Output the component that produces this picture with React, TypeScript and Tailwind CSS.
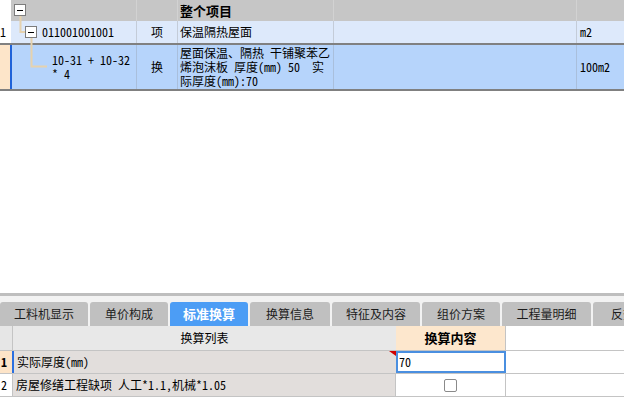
import React from "react";

const tabs = [
  { label: "工料机显示", w: "w-[88px]" },
  { label: "单价构成", w: "w-[78px]" },
  { label: "标准换算", w: "w-[78px]", active: true },
  { label: "换算信息", w: "w-[80px]" },
  { label: "特征及内容", w: "w-[88px]" },
  { label: "组价方案", w: "w-[78px]" },
  { label: "工程量明细", w: "w-[89px]" },
  { label: "反查", w: "w-[60px]" },
];

function TreeLines() {
  return (
    <svg className="absolute left-0 top-0 pointer-events-none" width="60" height="92">
      <path d="M20.5 16 V32 H25" fill="none" stroke="#e6d2ae" strokeWidth="2" />
      <path d="M31.5 38 V66.5 H47" fill="none" stroke="#e6d2ae" strokeWidth="2" />
      <rect x="14.5" y="4.5" width="11" height="11" fill="#fff" stroke="#7c7c7c" />
      <path d="M17 10.5 H23" stroke="#000" />
      <rect x="25.5" y="26.5" width="11" height="11" fill="#fff" stroke="#7c7c7c" />
      <path d="M28 32.5 H34" stroke="#000" />
    </svg>
  );
}

export default function App() {
  return (
    <div className="relative w-[624px] h-[411px] overflow-hidden bg-white flex flex-col text-[12px] leading-[14px] text-black font-['Noto_Sans_Mono_CJK_SC','Noto_Sans_CJK_SC',sans-serif]">
      {/* upper grid */}
      <div className="relative flex flex-col">
        <div className="flex h-[21px]">
          <div className="w-[11px] bg-white" />
          <div className="flex flex-1 bg-[#c6c6c6]">
            <div className="w-[126px] border-r border-[#d2d2d2]" />
            <div className="w-[41px] border-r border-[#d2d2d2]" />
            <div className="w-[156px] border-r border-[#d2d2d2] pl-[2px] flex items-center text-[13px] font-bold">
              整个项目
            </div>
            <div className="w-[243px] border-r border-[#d2d2d2]" />
            <div className="flex-1" />
          </div>
        </div>
        <div className="flex h-[22px] items-stretch">
          <div className="w-[11px] bg-white flex items-center">1</div>
          <div className="flex flex-1 bg-[#dde9fb]">
            <div className="w-[126px] border-r border-[#c4ccd8] pl-[31px] flex items-center">011001001001</div>
            <div className="w-[41px] border-r border-[#c4ccd8] flex items-center justify-center">项</div>
            <div className="w-[156px] border-r border-[#c4ccd8] pl-[2px] flex items-center">保温隔热屋面</div>
            <div className="w-[243px] border-r border-[#c4ccd8]" />
            <div className="flex-1 pl-[3px] flex items-center">m2</div>
          </div>
        </div>
        <div className="flex h-[48px] border-y-2 border-[#808080]">
          <div className="w-[10px] bg-[#fde5c9]" />
          <div className="w-[2px] bg-[#1f62d8]" />
          <div className="flex flex-1 bg-[#b6d4fb]">
            <div className="w-[125px] border-r border-[#a9bfdc] pl-[40px] flex flex-col justify-center">
              <span>10-31 + 10-32</span>
              <span>* 4</span>
            </div>
            <div className="w-[41px] border-r border-[#a9bfdc] flex items-center justify-center">换</div>
            <div className="w-[156px] border-r border-[#a9bfdc] pl-[2px] flex flex-col justify-center whitespace-pre">
              <span>屋面保温、隔热 干铺聚苯乙</span>
              <span>烯泡沫板 厚度(mm) 50  实</span>
              <span>际厚度(mm):70</span>
            </div>
            <div className="w-[243px] border-r border-[#a9bfdc]" />
            <div className="flex-1 pl-[3px] flex items-center">100m2</div>
          </div>
        </div>
        <TreeLines />
      </div>

      <div className="flex-1" />

      {/* lower panel */}
      <div className="h-[3px] bg-[#bebebe]" />
      <div className="bg-[#f2f2f2] pt-[6px] flex gap-[2px]">
        {tabs.map((t) => (
          <div
            key={t.label}
            className={`${t.w} shrink-0 h-[24px] rounded-t-[3px] flex items-center justify-center ${
              t.active ? "bg-[#4c9df5] text-white font-bold text-[13px]" : "bg-[#c0c0c0] text-[#1c1c1c]"
            }`}
          >
            {t.label}
          </div>
        ))}
      </div>
      <div className="flex flex-col">
        <div className="flex h-[25px] border-b border-[#c4c4c4]">
          <div className="w-[13px] bg-[#e6e6e6] border-r border-[#c4c4c4]" />
          <div className="w-[383px] bg-[#e8e8e8] flex items-center justify-center">换算列表</div>
          <div className="w-[110px] bg-[#fde7cd] border-r border-[#c4c4c4] flex items-center justify-center font-bold text-[13px]">
            换算内容
          </div>
          <div className="flex-1 bg-white" />
        </div>
        <div className="flex h-[23px] border-b border-[#c4c4c4]">
          <div className="w-[12px] bg-[#fde4c8] flex items-center pl-[1px] font-bold">1</div>
          <div className="w-[2px] bg-[#2a6fe0]" />
          <div className="relative w-[382px] bg-[#e2dedc] flex items-center pl-[3px]">
            实际厚度(mm)
            <svg className="absolute right-0 top-0" width="7" height="5">
              <path d="M0 0 H7 V5 Z" fill="#d00000" />
            </svg>
          </div>
          <div className="w-[110px] bg-white border-2 border-[#4a8fe0] flex items-center pl-[1px]">70</div>
          <div className="flex-1 bg-white" />
        </div>
        <div className="flex h-[23px] border-b border-[#c4c4c4]">
          <div className="w-[13px] bg-white border-r border-[#c4c4c4] flex items-center pl-[1px]">2</div>
          <div className="w-[383px] bg-[#e2dedc] border-r border-[#c4c4c4] flex items-center pl-[3px]">
            房屋修缮工程缺项 人工*1.1,机械*1.05
          </div>
          <div className="w-[110px] bg-white border-r border-[#c4c4c4] flex items-center justify-center">
            <div className="w-[13px] h-[13px] rounded-[2px] border border-[#8a8a8a] bg-white" />
          </div>
          <div className="flex-1 bg-white" />
        </div>
      </div>
      <div className="h-[14px] bg-white" />
    </div>
  );
}
